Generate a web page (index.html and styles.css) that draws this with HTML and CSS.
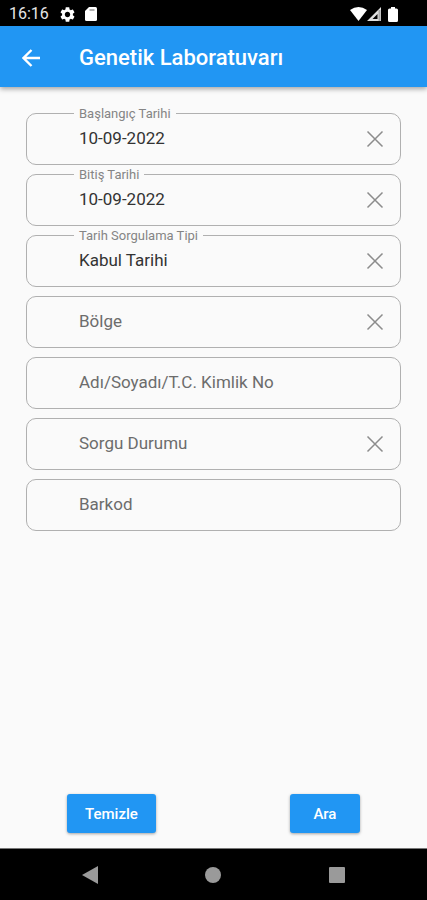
FILE: index.html
```html
<!DOCTYPE html>
<html lang="tr">
<head>
<meta charset="utf-8">
<meta name="viewport" content="width=device-width, initial-scale=1">
<title>Genetik Laboratuvarı</title>
<link rel="stylesheet" href="styles.css">
</head>
<body>
<svg class="defs" aria-hidden="true">
  <symbol id="close" viewBox="0 0 18 18"><path d="M1.5 1.5l15 15M16.500 1.500l-15 15" fill="none" stroke="#8c8c8c" stroke-width="1.500"/></symbol>
</svg>
<div class="status">
  <div class="status-side">
    <span class="clock">16:16</span>
    <svg class="gear" viewBox="2 2 20 20" aria-hidden="true"><path fill="#fff" d="M19.140 12.940c.04-.3.06-.61.06-.94 0-.32-.02-.64-.07-.94l2.030-1.580c.18-.14.23-.41.12-.61l-1.920-3.320c-.12-.22-.37-.29-.59-.22l-2.390.96c-.5-.38-1.030-.7-1.620-.94l-.36-2.540c-.04-.24-.24-.41-.48-.41h-3.840c-.24 0-.43.17-.47.41l-.36 2.540c-.59.24-1.130.57-1.620.94l-2.390-.96c-.22-.08-.47 0-.59.22L2.740 8.870c-.12.21-.08.47.12.61l2.030 1.580c-.05.3-.09.63-.09.94s.02.64.07.94l-2.030 1.580c-.18.14-.23.41-.12.61l1.920 3.320c.12.22.37.29.59.22l2.390-.96c.5.38 1.030.7 1.620.94l.36 2.540c.05.24.24.41.48.41h3.840c.24 0 .44-.17.47-.41l.36-2.540c.59-.24 1.130-.56 1.620-.94l2.390.96c.22.08.47 0 .59-.22l1.920-3.320c.12-.22.07-.47-.12-.61l-2.010-1.580zM12 15.600c-1.980 0-3.600-1.620-3.600-3.600s1.620-3.600 3.600-3.600 3.600 1.620 3.600 3.600-1.620 3.600-3.600 3.600z"/></svg>
    <svg class="card" viewBox="0 0 12 14" aria-hidden="true"><path fill="#fff" d="M4 0h6.500Q12 0 12 1.500v11q0 1.500-1.500 1.500h-9Q0 14 0 12.500V4z"/><path d="M4.500 3h5" stroke="#999" stroke-width="1.500"/></svg>
  </div>
  <div class="status-side">
    <svg class="wifi" viewBox="0 0 17 14" aria-hidden="true"><path fill="#fff" d="M0 3Q8.500-3 17 3L8.500 14z"/></svg>
    <svg class="cell" viewBox="0 0 14 14" aria-hidden="true"><path fill="#e0e0e0" fill-rule="evenodd" d="M0 14L14 0v14zM5.500 12h5V7z"/><path d="M12.500 3v11" stroke="#a8a8a8" stroke-width="2"/></svg>
    <svg class="battery" viewBox="0 0 10 15" aria-hidden="true"><path fill="#fff" d="M3 0h4v1.500h1.500Q10 1.500 10 3v10.500Q10 15 8.500 15h-7Q0 15 0 13.500V3q0-1.500 1.500-1.500H3z"/></svg>
  </div>
</div>
<header class="appbar">
  <button class="back" type="button" aria-label="Geri"><svg viewBox="0 0 18 18" aria-hidden="true"><path d="M18 9H2M9.500 1L1.500 9l8 8" fill="none" stroke="#fff" stroke-width="2.400"/></svg></button>
  <h1>Genetik Laboratuvarı</h1>
</header>
<form class="page">
  <div class="fields">
    <div class="field"><label for="start">Başlangıç Tarihi</label><input id="start" type="text" value="10-09-2022"><button type="button" class="clear" aria-label="Temizle"><svg aria-hidden="true"><use href="#close"/></svg></button></div>
    <div class="field"><label for="end">Bitiş Tarihi</label><input id="end" type="text" value="10-09-2022"><button type="button" class="clear" aria-label="Temizle"><svg aria-hidden="true"><use href="#close"/></svg></button></div>
    <div class="field"><label for="kind">Tarih Sorgulama Tipi</label><input id="kind" type="text" value="Kabul Tarihi"><button type="button" class="clear" aria-label="Temizle"><svg aria-hidden="true"><use href="#close"/></svg></button></div>
    <div class="field"><input type="text" aria-label="Bölge" placeholder="Bölge"><button type="button" class="clear" aria-label="Temizle"><svg aria-hidden="true"><use href="#close"/></svg></button></div>
    <div class="field"><input type="text" aria-label="Adı/Soyadı/T.C. Kimlik No" placeholder="Adı/Soyadı/T.C. Kimlik No"></div>
    <div class="field"><input type="text" aria-label="Sorgu Durumu" placeholder="Sorgu Durumu"><button type="button" class="clear" aria-label="Temizle"><svg aria-hidden="true"><use href="#close"/></svg></button></div>
    <div class="field"><input type="text" aria-label="Barkod" placeholder="Barkod"></div>
  </div>
  <div class="actions">
    <button class="action" type="reset">Temizle</button>
    <button class="action" type="submit">Ara</button>
  </div>
</form>
<nav class="sysnav">
  <button type="button" aria-label="Geri"><svg viewBox="0 0 18 18"><path d="M17 0v18L1 9z" fill="#9a9a9a"/></svg></button>
  <button type="button" aria-label="Ana ekran"><svg viewBox="0 0 18 18"><circle cx="9" cy="9" r="8" fill="#9a9a9a"/></svg></button>
  <button type="button" aria-label="Son uygulamalar"><svg viewBox="0 0 18 18"><rect x="1" y="1" width="16" height="16" rx="1" fill="#9a9a9a"/></svg></button>
</nav>
</body>
</html>
```
FILE: styles.css
```css
* {
  box-sizing: border-box;
}

body {
  margin: 0;
  min-height: 100vh;
  display: flex;
  flex-direction: column;
  background: #fafafa;
  font-family: Roboto, sans-serif;
}

button,
input {
  font: inherit;
  border: 0;
  padding: 0;
  background: none;
}

svg {
  display: block;
}

.defs {
  display: none;
}

.status {
  height: 26px;
  padding: 2px 29px 0 9px;
  display: flex;
  justify-content: space-between;
  align-items: center;
  background: #000;
}

.status-side {
  display: flex;
  align-items: center;
}

.clock {
  margin-right: 11px;
  color: #e6e6e6;
  font-size: 16px;
  line-height: 20px;
}

.gear {
  width: 15px;
  height: 15px;
  margin-right: 10px;
}

.card {
  width: 12px;
  height: 14px;
}

.wifi {
  width: 17px;
  height: 14px;
}

.cell {
  width: 14px;
  height: 14px;
  margin-right: 7px;
}

.battery {
  width: 10px;
  height: 15px;
}

.appbar {
  height: 61px;
  padding: 2px 0 0 22px;
  display: flex;
  align-items: center;
  gap: 39px;
  background: #2196f3;
  box-shadow: 0 2px 5px rgba(0, 0, 0, 0.35);
}

.back svg {
  width: 18px;
  height: 18px;
}

h1 {
  margin: 0;
  color: #fff;
  font-size: 22px;
  line-height: 28px;
  font-weight: 500;
}

.page {
  flex: 1;
  padding: 26px 26px 15px;
  display: flex;
  flex-direction: column;
  justify-content: space-between;
}

.fields {
  display: flex;
  flex-direction: column;
  gap: 9px;
}

.field {
  position: relative;
  height: 52px;
  padding: 0 16px 0 52px;
  display: flex;
  align-items: center;
  border: 1px solid #b0b0b0;
  border-radius: 10px;
}

.field label {
  position: absolute;
  top: -8px;
  left: 47px;
  padding: 0 5px;
  background: #fafafa;
  color: #858585;
  font-size: 13px;
  line-height: 16px;
}

.field input {
  flex: 1;
  min-width: 0;
  height: 100%;
  padding-bottom: 2px;
  color: #333;
  font-size: 17px;
  outline: 0;
}

.field input::placeholder {
  color: #6c6c6c;
  opacity: 1;
}

.clear svg {
  width: 18px;
  height: 18px;
}

.actions {
  margin: 0 -26px;
  display: flex;
  justify-content: space-around;
}

.action {
  min-width: 70px;
  height: 39px;
  padding: 0 18px;
  border-radius: 3px;
  background: #2196f3;
  box-shadow: 0 1px 3px rgba(0, 0, 0, 0.35);
  color: #fff;
  font-size: 15px;
  font-weight: 500;
}

.sysnav {
  height: 52px;
  padding: 0 28px;
  display: grid;
  grid-template-columns: repeat(3, 1fr);
  place-items: center;
  border-top: 1px solid #777;
  background: #000;
}

.sysnav svg {
  width: 18px;
  height: 18px;
}
```
